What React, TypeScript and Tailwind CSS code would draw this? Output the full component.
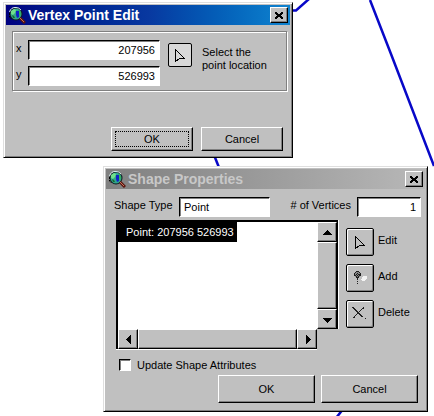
import { useState } from 'react'
import type { ReactNode } from 'react'
import clsx from 'clsx'

const raised =
  'border border-t-white border-l-white border-r-black border-b-black bg-[#c0c0c0] shadow-[inset_-1px_-1px_#808080]'
const sunken =
  'border border-t-black border-l-black border-r-white border-b-white shadow-[inset_1px_1px_#808080] bg-white'

function GlobeIcon() {
  return (
    <svg width="18" height="18" viewBox="0 0 18 18" className="shrink-0" aria-hidden="true">
      <circle cx="8" cy="8" r="6.5" fill="#101820" />
      <circle cx="8" cy="8" r="5.5" fill="#2fa58c" />
      <path d="M3 5l3-2 2 1-1 3-2 2-2-1z" fill="#6fe08c" />
      <path d="M8 5h3v6l-2 1-1-3z" fill="#1020c8" />
      <path d="M4 9l2 1 1 2-2 0z" fill="#1a6a30" />
      <path d="M11 4l2 3-1 3-1-2z" fill="#30b850" />
      <path d="M1.500 6Q3 1 8 1.500Q11 1.500 13 4" stroke="#d8f0f0" fill="none" />
      <path d="M1.5 7v4l2 2" stroke="#000" strokeDasharray="2 1" fill="none" />
      <path d="M12 12l5 5" stroke="#5a1810" strokeWidth="3" />
      <path d="M12 12l4 4" stroke="#c8705c" strokeWidth="1" />
    </svg>
  )
}

function PointerIcon() {
  return (
    <svg width="15" height="17" viewBox="0 0 15 17" fill="none" stroke="#000" shapeRendering="crispEdges" aria-hidden="true">
      <path d="M2.5 2.5v12l4-3h5z" />
    </svg>
  )
}

function AddIcon() {
  return (
    <svg width="18" height="18" viewBox="0 0 18 18" shapeRendering="crispEdges" aria-hidden="true">
      <path d="M5 2h3v1h1v1h1v3H9v1H8v1H5V8H4V7H3V4h1V3h1z" fill="#888" />
      <path d="M5 2h3v1H5zM4 3h1v1H4zM8 3h1v1H8zM3 4h1v3H3zM9 4h1v3H9zM6 4h1v1H6zM8 5h1v1H8zM5 5h1v1H5zM7 5h1v1H7zM4 6h1v1H4zM6 6h1v1H6zM8 6h1v1H8zM5 7h1v1H5zM7 7h1v1H7zM5 8h3v1H5zM6 9h1v2H6zM6 12h1v1H6zM6 14h1v1H6z" fill="#202020" />
      <path d="M12 7h4v1h-4zM11 8h5v2h-5zM10 10h5v1h-5zM11 11h3v1h-3z" fill="#f4f4f4" />
    </svg>
  )
}

function DeleteIcon() {
  return (
    <svg width="18" height="18" viewBox="0 0 18 18" fill="none" stroke="#202020" shapeRendering="crispEdges" aria-hidden="true">
      <path d="M1.5 2.5l10 10M2.5 2.5l10 10M12.5 2.5l-10 10M2 12.5h2M11 3.5h2" />
      <path d="M14 13.5h1" />
    </svg>
  )
}

type WindowProps = { title: string; active?: boolean; className?: string; children: ReactNode }

function Window({ title, active, className, children }: WindowProps) {
  return (
    <section
      aria-label={title}
      className={clsx(
        'absolute border border-t-[#dfdfdf] border-l-[#dfdfdf] border-r-black border-b-black bg-[#c0c0c0] p-0.5 shadow-[inset_1px_1px_#fff,inset_-1px_-1px_#808080]',
        className,
      )}
    >
      <header
        className={clsx(
          'flex h-5 items-center gap-0.5 bg-gradient-to-r px-0.5',
          active ? 'from-[#000080] via-[#0838a0] to-[#1084d0] text-white' : 'from-[#808080] to-[#b8b8b8] text-[#c8c8c8]',
        )}
      >
        <GlobeIcon />
        <h2 className="flex-1 text-sm leading-5 font-bold">{title}</h2>
        <button type="button" aria-label="Close" className={clsx('flex h-4 w-[18px] items-center justify-center', raised)}>
          <svg width="8" height="7" viewBox="0 0 8 7" shapeRendering="crispEdges" aria-hidden="true">
            <path d="M0 0h2v1h1v1h2V1h1V0h2v2H7v1H6v1h1v1h1v2H6V6H5V5H3v1H2v1H0V5h1V4h1V3H1V2H0z" fill="#000" />
          </svg>
        </button>
      </header>
      {children}
    </section>
  )
}

function PushButton({ children, focused, className }: { children: ReactNode; focused?: boolean; className?: string }) {
  return (
    <button type="button" className={clsx('p-[3px]', raised, className)}>
      <span className={clsx('flex h-full items-center justify-center', focused && 'border border-dotted border-black')}>
        {children}
      </span>
    </button>
  )
}

function ToolButton({ label, children }: { label: string; children: ReactNode }) {
  return (
    <label className="flex items-center gap-1">
      <button
        type="button"
        className="flex size-7 items-center justify-center rounded-xs border border-black bg-[#c0c0c0] shadow-[inset_1px_1px_#fff,inset_-1px_-1px_#808080]"
      >
        {children}
      </button>
      <span className="pb-1">{label}</span>
    </label>
  )
}

const arrows = {
  up: 'M1 8L5.5 3L10 8z',
  down: 'M1 4L5.5 9L10 4z',
  left: 'M8 1L3 5.5L8 10z',
  right: 'M4 1L9 5.5L4 10z',
}

function ScrollButton({ dir }: { dir: keyof typeof arrows }) {
  return (
    <button type="button" aria-label={`Scroll ${dir}`} className={clsx('flex size-5 shrink-0 items-center justify-center', raised)}>
      <svg width="11" height="11" viewBox="0 0 11 11" shapeRendering="crispEdges" aria-hidden="true">
        <path d={arrows[dir]} fill="#000" />
      </svg>
    </button>
  )
}

function VertexPointEdit() {
  const [point, setPoint] = useState({ x: '207956', y: '526993' })

  return (
    <Window title="Vertex Point Edit" active className="top-0.5 left-[3px] w-[290px]">
      <div className="pt-1.5 pr-[3px] pb-1 pl-1.5">
        <fieldset className="flex items-start gap-2 border border-[#808080] pt-2 pr-2 pb-1 pl-[3px] shadow-[inset_1px_1px_#fff,1px_1px_#fff]">
          <div className="flex flex-1 flex-col gap-1.5">
            {(['x', 'y'] as const).map((axis) => (
              <div key={axis} className="flex items-center">
                <label htmlFor={axis} className="w-3 pb-1">
                  {axis}
                </label>
                <input
                  id={axis}
                  value={point[axis]}
                  onChange={(e) => setPoint({ ...point, [axis]: e.target.value })}
                  className={clsx('h-5 w-full min-w-0 flex-1 pr-1 text-right outline-none', sunken)}
                />
              </div>
            ))}
          </div>
          <button
            type="button"
            aria-labelledby="pick-label"
            className="mt-[3px] flex size-6 items-center justify-center rounded-xs border border-black bg-[#d8d8d8]"
          >
            <PointerIcon />
          </button>
          <p id="pick-label" className="w-[78px] pt-1.5 pl-0.5 leading-[13px] whitespace-nowrap">
            Select the
            <br />
            point location
          </p>
        </fieldset>
        <div className="mt-9 flex justify-end gap-2 pr-1">
          <PushButton focused className="h-6 w-[82px]">OK</PushButton>
          <PushButton className="h-6 w-[82px]">Cancel</PushButton>
        </div>
      </div>
    </Window>
  )
}

function ShapeProperties() {
  const [update, setUpdate] = useState(false)

  return (
    <Window title="Shape Properties" className="top-[166px] left-[103px] w-[325px]">
      <div className="pt-2 pr-1 pb-1.5 pl-2">
        <div className="flex items-center">
          <label htmlFor="shape-type" className="w-[65px] pb-1 whitespace-nowrap">Shape Type</label>
          <input id="shape-type" defaultValue="Point" className={clsx('h-5 w-[91px] pl-1 outline-none', sunken)} />
          <label htmlFor="vertices" className="ml-auto pr-1.5 pb-1 whitespace-nowrap"># of Vertices</label>
          <input id="vertices" defaultValue="1" className={clsx('h-5 w-16 pr-1 text-right outline-none', sunken)} />
        </div>

        <div className="mt-[3px] flex gap-2 pl-0.5">
          <div className="min-w-0 flex-1">
            <div className="flex border border-r-0 border-b-0 border-black shadow-[1px_0_#fff]">
              <ul role="listbox" aria-label="Points" className="h-[108px] flex-1 border-t border-l border-black bg-white">
                <li role="option" aria-selected="true" className="h-5 w-[119px] bg-black pl-2 leading-5 whitespace-nowrap text-white">
                  Point: 207956 526993
                </li>
              </ul>
              <div className="flex w-[21px] flex-col border-t border-r border-black">
                <ScrollButton dir="up" />
                <div className={clsx('flex-1', raised)} />
                <ScrollButton dir="down" />
              </div>
            </div>
            <div className="mr-[21px] flex border-l-2 border-black shadow-[0_1px_#fff]">
              <ScrollButton dir="left" />
              <div className={clsx('flex-1', raised)} />
              <ScrollButton dir="right" />
            </div>
          </div>
          <div className="flex w-[75px] flex-col gap-2 pt-2">
            <ToolButton label="Edit"><PointerIcon /></ToolButton>
            <ToolButton label="Add"><AddIcon /></ToolButton>
            <ToolButton label="Delete"><DeleteIcon /></ToolButton>
          </div>
        </div>

        <label className="mt-2 flex items-center gap-1.5 pl-[5px]">
          <input
            type="checkbox"
            checked={update}
            onChange={(e) => setUpdate(e.target.checked)}
            className={clsx('size-3 appearance-none checked:bg-black', sunken)}
          />
          Update Shape Attributes
        </label>
        <div className="mt-0.5 flex justify-end gap-1.5 pr-[3px]">
          <PushButton className="h-7 w-[97px]">OK</PushButton>
          <PushButton className="h-7 w-[97px]">Cancel</PushButton>
        </div>
      </div>
    </Window>
  )
}

export default function App() {
  return (
    <main className="relative min-h-screen w-full overflow-hidden bg-white font-['Liberation_Sans',sans-serif] text-[11px] leading-4 text-black">
      {/* Map lines behind the dialogs */}
      <svg width="434" height="416" viewBox="0 0 434 416" className="absolute top-0 left-0" fill="none" stroke="#0808c8" strokeWidth="2.5" aria-hidden="true">
        <path d="M290 10.5h6L309-1" />
        <path d="M370 0L391 54L434 166" />
        <path d="M214 155L220 170" />
        <path d="M336 418L344 408" />
      </svg>
      <VertexPointEdit />
      <ShapeProperties />
    </main>
  )
}
